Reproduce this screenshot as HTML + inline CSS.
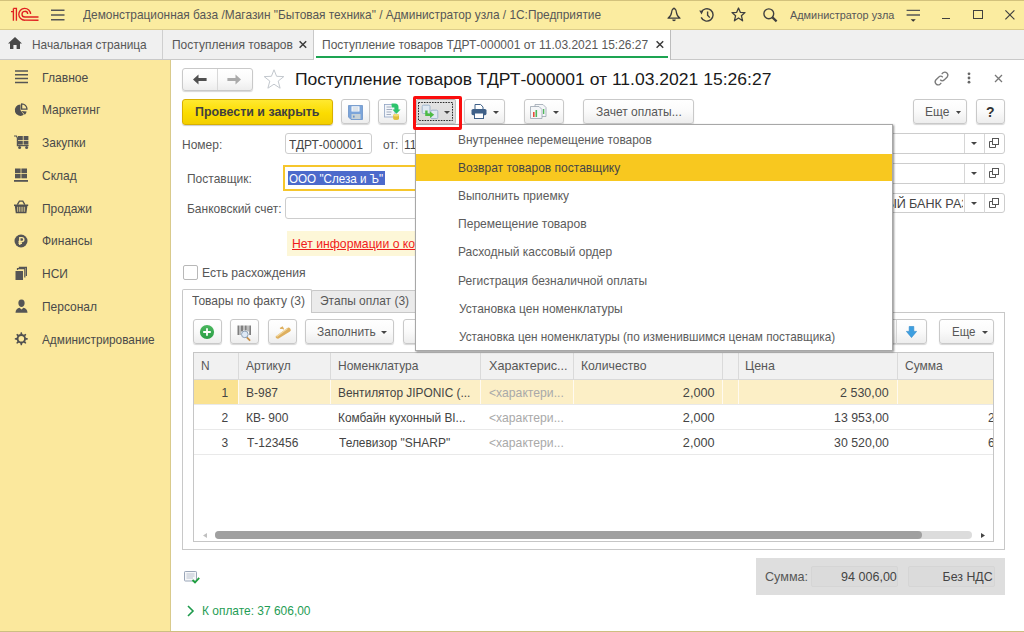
<!DOCTYPE html>
<html><head><meta charset="utf-8">
<style>
*{box-sizing:border-box;margin:0;padding:0}
html,body{width:1024px;height:632px;overflow:hidden;background:#fff;font-family:"Liberation Sans",sans-serif;color:#575757;font-size:13px}
.a{position:absolute;white-space:pre;line-height:1}
.b{position:absolute}
svg{position:absolute;overflow:visible}
.btn{position:absolute;height:25px;border:1px solid #c9c9c9;border-radius:3px;background:linear-gradient(#ffffff 0%,#fafafa 50%,#ededed 100%);box-shadow:0 1px 1px rgba(0,0,0,.16)}
.fld{position:absolute;height:21px;border:1px solid #cdcdcd;border-radius:3px;background:#fff}
</style></head><body>
<div class="b" style="left:0;top:0;width:1024px;height:30px;background:#fbeca0;border-top:1px solid #d3c27c;border-bottom:1px solid #ddcd8a"></div>
<div class="b" style="left:0;top:30px;width:1024px;height:30px;background:#f0f0f0;border-bottom:1px solid #c9c9c9"></div>
<div class="b" style="left:0;top:60px;width:171px;height:572px;background:#fbe89d;border-right:1px solid #d9ca8c"></div>
<div class="b" style="left:0;top:631px;width:1024px;height:1px;background:#cdbf80"></div>
<svg style="left:0;top:0" width="45" height="28" viewBox="0 0 45 28"><g fill="none" stroke="#e02020" stroke-width="1.35">
<path d="M11 11.6 H13.4 M13.4 8.4 V20.8 M13.4 8.4 H16.4 V20.8"/>
<path d="M30.6 14.1 A5.9 5.9 0 1 0 24.8 20.2 H38.5"/>
<path d="M27.7 14.1 A2.85 2.85 0 1 0 24.85 17 H38.5"/></g></svg>
<svg style="left:51px;top:9px" width="14" height="12" viewBox="0 0 14 12"><g stroke="#555" stroke-width="1.5"><path d="M0 1.2H13.5M0 6H13.5M0 10.8H13.5"/></g></svg>
<div class="a" style="top:8px;font-size:13px;left:83.00px;transform-origin:0 0;transform:scaleX(0.9136);">Демонстрационная база /Магазин "Бытовая техника" / Администратор узла / 1С:Предприятие</div>
<svg style="left:667px;top:7px" width="14" height="15" viewBox="0 0 14 15"><path d="M7 1.6 C5.4 1.6 4.9 2.8 4.6 5.4 C4.3 8.4 3.4 9.6 1 11.2 H13 C10.6 9.6 9.7 8.4 9.4 5.4 C9.1 2.8 8.6 1.6 7 1.6Z" fill="none" stroke="#3c3c3c" stroke-width="1.25" stroke-linejoin="round"/><circle cx="7" cy="1.3" r="0.9" fill="#3c3c3c"/><path d="M5.2 12.6 H8.8 A1.8 1.7 0 0 1 5.2 12.6Z" fill="#3c3c3c"/></svg>
<svg style="left:699px;top:8px" width="16" height="14" viewBox="0 0 16 14"><g fill="none" stroke="#404040" stroke-width="1.4"><path d="M2.3 4.2 A6.2 6.2 0 1 1 2.2 9.4"/><path d="M8.6 3.6 V7.2 L10.8 9.6"/></g><path d="M0.2 2.6 L4.2 2.8 L2.6 6.4Z" fill="#404040"/></svg>
<svg style="left:731px;top:7px" width="15" height="15" viewBox="0 0 15 15"><path d="M7.5 1 L9.3 5.3 L14 5.6 L10.4 8.7 L11.6 13.8 L7.5 11 L3.4 13.8 L4.6 8.7 L1 5.6 L5.7 5.3Z" fill="none" stroke="#404040" stroke-width="1.3" stroke-linejoin="round"/></svg>
<svg style="left:763px;top:8px" width="15" height="14" viewBox="0 0 15 14"><g fill="none" stroke="#404040"><circle cx="5.8" cy="5.8" r="4.9" stroke-width="1.4"/><path d="M9.4 9.4 L13.6 13.4" stroke-width="2.2"/></g></svg>
<div class="a" style="top:10px;font-size:11px;left:790.00px;transform-origin:0 0;transform:scaleX(0.9905);">Администратор узла</div>
<svg style="left:906px;top:9px" width="15" height="13" viewBox="0 0 15 13"><g stroke="#555" stroke-width="1.3"><path d="M0.6 1.3H14M0.6 6H14"/></g><path d="M4.6 10.2 H9.8 L7.2 12.8Z" fill="#333"/></svg>
<div class="b" style="left:942px;top:18px;width:8px;height:1.3px;background:#404040"></div>
<div class="b" style="left:973px;top:10px;width:9.5px;height:9px;border:1.3px solid #404040"></div>
<svg style="left:1005px;top:10px" width="10" height="10" viewBox="0 0 10 10"><path d="M0.4 0.4 L9.4 9.4 M9.4 0.4 L0.4 9.4" stroke="#404040" stroke-width="1.2"/></svg>
<svg style="left:8px;top:37px" width="14" height="12" viewBox="0 0 14 12"><path d="M7 0 L14 6.4 H12 V12 H8.6 V8 H5.4 V12 H2 V6.4 H0 Z" fill="#484848"/></svg>
<div class="a" style="top:38px;font-size:13px;left:32.09px;transform-origin:0 0;transform:scaleX(0.9120);">Начальная страница</div>
<div class="b" style="left:162px;top:30px;width:1px;height:29px;background:#cfcfcf"></div>
<div class="a" style="top:38px;font-size:13px;left:171.58px;transform-origin:0 0;transform:scaleX(0.9225);">Поступления товаров</div>
<svg style="left:299px;top:41px" width="8" height="7" viewBox="0 0 8 7"><path d="M0.6 0.3 L7.2 6.7 M7.2 0.3 L0.6 6.7" stroke="#3c3c3c" stroke-width="1.5"/></svg>
<div class="b" style="left:313px;top:30px;width:358px;height:30px;background:#fff;border-left:1px solid #c9c9c9;border-right:1px solid #bdbdbd"></div>
<div class="b" style="left:316px;top:56px;width:352px;height:2px;background:#1da452"></div>
<div class="a" style="top:38px;font-size:13px;left:322.08px;transform-origin:0 0;transform:scaleX(0.9233);">Поступление товаров ТДРТ-000001 от 11.03.2021 15:26:27</div>
<svg style="left:656px;top:41px" width="8" height="7" viewBox="0 0 8 7"><path d="M0.6 0.3 L7.2 6.7 M7.2 0.3 L0.6 6.7" stroke="#3c3c3c" stroke-width="1.5"/></svg>
<div class="a" style="top:71px;font-size:13px;color:#4a4a4a;left:41.57px;transform-origin:0 0;transform:scaleX(0.9333);">Главное</div>
<div class="a" style="top:103px;font-size:13px;color:#4a4a4a;left:41.58px;transform-origin:0 0;transform:scaleX(0.9220);">Маркетинг</div>
<div class="a" style="top:136px;font-size:13px;color:#4a4a4a;left:41.58px;transform-origin:0 0;transform:scaleX(0.9220);">Закупки</div>
<div class="a" style="top:169px;font-size:13px;color:#4a4a4a;left:41.58px;transform-origin:0 0;transform:scaleX(0.9220);">Склад</div>
<div class="a" style="top:202px;font-size:13px;color:#4a4a4a;left:41.58px;transform-origin:0 0;transform:scaleX(0.9220);">Продажи</div>
<div class="a" style="top:234px;font-size:13px;color:#4a4a4a;left:41.58px;transform-origin:0 0;transform:scaleX(0.9220);">Финансы</div>
<div class="a" style="top:267px;font-size:13px;color:#4a4a4a;left:41.58px;transform-origin:0 0;transform:scaleX(0.9220);">НСИ</div>
<div class="a" style="top:300px;font-size:13px;color:#4a4a4a;left:41.58px;transform-origin:0 0;transform:scaleX(0.9220);">Персонал</div>
<div class="a" style="top:333px;font-size:13px;color:#4a4a4a;left:41.80px;transform-origin:0 0;transform:scaleX(0.9081);">Администрирование</div>
<svg style="left:14px;top:70px" width="14" height="14" viewBox="0 0 14 14"><g stroke="#555" stroke-width="1.5"><path d="M1 1H14M1 4.8H14M1 8.6H14M1 12.4H14"/></g></svg>
<svg style="left:14px;top:102px" width="15" height="15" viewBox="0 0 15 15"><g fill="#505050"><path d="M6.5 8.2 L9.77 12.87 A5.7 5.7 0 1 1 6.5 2.5 Z"/><path d="M7.4 9 L12.6 9.6 A5.2 5.2 0 0 1 10.9 12.8 Z"/></g><path d="M7.6 7.2 V1.8 A5.4 5.4 0 0 1 13 7.2 Z" fill="none" stroke="#505050" stroke-width="1.3" stroke-linejoin="round"/></svg>
<svg style="left:14px;top:135px" width="15" height="14" viewBox="0 0 15 14"><path d="M0 1 H2.4 L3.4 3 V10.6 H14.6" fill="none" stroke="#555" stroke-width="1.2"/><g fill="#555"><rect x="4" y="1" width="4.8" height="4"/><rect x="9.6" y="1" width="4.8" height="4"/><rect x="4" y="5.8" width="4.8" height="3.8"/><rect x="9.6" y="5.8" width="4.8" height="3.8"/><circle cx="5.6" cy="12.4" r="1.5"/><circle cx="12.6" cy="12.4" r="1.5"/></g></svg>
<svg style="left:14px;top:168px" width="14" height="14" viewBox="0 0 14 14"><g fill="#555"><rect x="1" y="0.5" width="5.6" height="4.6"/><rect x="7.4" y="0.5" width="5.6" height="4.6"/><rect x="1" y="5.9" width="5.6" height="4.4"/><rect x="7.4" y="5.9" width="5.6" height="4.4"/><rect x="0" y="12" width="14" height="1.8"/></g></svg>
<svg style="left:14px;top:200px" width="15" height="14" viewBox="0 0 15 14"><path d="M0 4.6 H14.2 V6 H13.4 L12.4 13.2 H1.8 L0.8 6 H0Z" fill="#505050"/><path d="M3.4 4.6 L5.4 1.2 H8.8 L10.8 4.6" fill="none" stroke="#505050" stroke-width="1.3"/><g stroke="#fbe89d" stroke-width="0.7"><path d="M3.6 6.8 V11.8M5.4 6.8V11.8M7.1 6.8V11.8M8.8 6.8V11.8M10.6 6.8V11.8"/></g></svg>
<svg style="left:14px;top:234px" width="14" height="14" viewBox="0 0 14 14"><circle cx="7" cy="7" r="6.5" fill="#555"/><path d="M5.8 11 V3.6 H7.9 A1.95 1.95 0 0 1 7.9 7.5 H4.5 M4.5 9.2 H8" fill="none" stroke="#fbe89d" stroke-width="1.4"/></svg>
<svg style="left:15px;top:267px" width="12" height="13" viewBox="0 0 12 13"><rect x="0.5" y="4" width="7.5" height="9" fill="#555"/><path d="M2.5 3 V1.6 H9.8 V10.6 M4.4 1 V0.4 H11.4 V9" fill="none" stroke="#555" stroke-width="1.2"/></svg>
<svg style="left:15px;top:299px" width="13" height="14" viewBox="0 0 13 14"><g fill="#555"><path d="M6.5 0.5 C9 0.5 9.8 2.5 9.6 4.5 C9.4 6.6 8.2 8 6.5 8 C4.8 8 3.6 6.6 3.4 4.5 C3.2 2.5 4 0.5 6.5 0.5Z"/><path d="M0.5 13.8 C0.5 10.5 2.5 9.2 4.5 8.8 L6.5 10.5 L8.5 8.8 C10.5 9.2 12.5 10.5 12.5 13.8Z"/></g></svg>
<svg style="left:14px;top:332px" width="15" height="14" viewBox="0 0 15 14"><g transform="translate(7.3 6.8)"><circle r="3.75" fill="none" stroke="#505050" stroke-width="1.9"/><g fill="#505050"><path d="M-1.1 -4.2 L-0.6 -6.5 H0.6 L1.1 -4.2Z" transform="rotate(0)"/><path d="M-1.1 -4.2 L-0.6 -6.5 H0.6 L1.1 -4.2Z" transform="rotate(45)"/><path d="M-1.1 -4.2 L-0.6 -6.5 H0.6 L1.1 -4.2Z" transform="rotate(90)"/><path d="M-1.1 -4.2 L-0.6 -6.5 H0.6 L1.1 -4.2Z" transform="rotate(135)"/><path d="M-1.1 -4.2 L-0.6 -6.5 H0.6 L1.1 -4.2Z" transform="rotate(180)"/><path d="M-1.1 -4.2 L-0.6 -6.5 H0.6 L1.1 -4.2Z" transform="rotate(225)"/><path d="M-1.1 -4.2 L-0.6 -6.5 H0.6 L1.1 -4.2Z" transform="rotate(270)"/><path d="M-1.1 -4.2 L-0.6 -6.5 H0.6 L1.1 -4.2Z" transform="rotate(315)"/></g></g></svg>
<div class="btn" style="left:182px;top:68px;width:71px;height:23px"></div>
<div class="b" style="left:217px;top:69px;width:1px;height:21px;background:#d8d8d8"></div>
<svg style="left:193px;top:74px" width="14" height="11" viewBox="0 0 14 11"><path d="M0 5.5 L5.5 0.5 V4 H13.6 V7 H5.5 V10.5Z" fill="#505050"/></svg>
<svg style="left:227px;top:74px" width="14" height="11" viewBox="0 0 14 11"><path d="M14 5.5 L8.5 0.5 V4 H0.4 V7 H8.5 V10.5Z" fill="#aaaaaa"/></svg>
<svg style="left:263px;top:69px" width="22" height="20" viewBox="0 0 22 20"><path d="M11 0.8 L13.6 7.3 L20.8 7.6 L15.2 12.1 L17.1 19.2 L11 15.2 L4.9 19.2 L6.8 12.1 L1.2 7.6 L8.4 7.3Z" fill="none" stroke="#c3c8ce" stroke-width="1"/></svg>
<div class="a" style="top:71px;font-size:17px;color:#1a1a1a;left:294.97px;transform-origin:0 0;transform:scaleX(1.0313);">Поступление товаров ТДРТ-000001 от 11.03.2021 15:26:27</div>
<svg style="left:933px;top:70px" width="17" height="17" viewBox="0 0 17 17"><g fill="none" stroke="#7a7a7a" stroke-width="1.3"><path d="M7.2 9.8 A3 3 0 0 0 11.4 9.8 L14.2 7 A3 3 0 0 0 10 2.8 L8.7 4.1"/><path d="M9.8 7.2 A3 3 0 0 0 5.6 7.2 L2.8 10 A3 3 0 0 0 7 14.2 L8.3 12.9"/></g></svg>
<svg style="left:967px;top:72px" width="4" height="12" viewBox="0 0 4 12"><g fill="#666"><circle cx="2" cy="1.8" r="1.4"/><circle cx="2" cy="6" r="1.4"/><circle cx="2" cy="10.2" r="1.4"/></g></svg>
<svg style="left:994px;top:74px" width="9" height="9" viewBox="0 0 9 9"><path d="M1 1 L8 8 M8 1 L1 8" stroke="#777" stroke-width="1.3"/></svg>
<div class="b" style="left:182px;top:99px;width:151px;height:26px;border:1px solid #d8b000;border-radius:3px;background:linear-gradient(#ffe930,#fbdc00 55%,#f3cf00);box-shadow:0 1px 1px rgba(0,0,0,.2)"></div>
<div class="a" style="top:105px;font-size:13px;font-weight:bold;color:#3f3f3f;left:194.84px;transform-origin:0 0;transform:scaleX(0.9550);">Провести и закрыть</div>
<div class="btn" style="left:341px;top:99px;width:29px"></div>
<svg style="left:348px;top:105px" width="15" height="15" viewBox="0 0 15 15"><path d="M0.5 0.5 H14.5 V14.5 H3 L0.5 12Z" fill="#7ca5da" stroke="#6a92c8" stroke-width="0.8"/><rect x="3.5" y="1.3" width="8" height="5.2" fill="#fff"/><path d="M4.5 3 H10.5 M4.5 5 H10.5" stroke="#9fb2c6" stroke-width="0.7"/><rect x="3.5" y="9" width="9" height="5" fill="#c7d1d6"/><rect x="5" y="10.6" width="1.6" height="2" fill="#6a92c8"/></svg>
<div class="btn" style="left:378px;top:99px;width:29px"></div>
<svg style="left:384px;top:103px" width="17" height="18" viewBox="0 0 17 18"><rect x="0.5" y="1.5" width="10.5" height="12.5" fill="#f2f5fa" stroke="#90a4c2" stroke-width="0.8"/><path d="M2.5 4 H7 M2.5 6.5 H8 M2.5 9 H7.5 M2.5 11.5 H7" stroke="#8e9bb0" stroke-width="0.8"/><path d="M9.2 12.2 A2.9 1.2 0 0 1 15 12.2 V15.8 A2.9 1.2 0 0 1 9.2 15.8Z" fill="#e0bf3c"/><ellipse cx="12.1" cy="12.2" rx="2.9" ry="1.2" fill="#f3dc7a"/><path d="M7.6 0.6 H11 A3.5 3.5 0 0 1 14.5 4.1 V6.4 H16.6 L12.5 10.8 L8.4 6.4 H10.5 V4.6 H7.6Z" fill="#2cc46c"/></svg>
<div class="btn" style="left:464px;top:99px;width:41px"></div>
<svg style="left:471px;top:104px" width="16" height="15" viewBox="0 0 16 15"><path d="M4 5 V0.5 H9.6 L12 2.9 V5" fill="#fff" stroke="#3f6088" stroke-width="1"/><rect x="0.5" y="5" width="15" height="6.2" rx="1.6" fill="#3f6088"/><rect x="3.5" y="9" width="9" height="5.5" fill="#fff" stroke="#3f6088" stroke-width="1"/></svg>
<svg style="left:493px;top:111px" width="6" height="3" viewBox="0 0 6 3"><path d="M0 0H6L3 3Z" fill="#444"/></svg>
<div class="btn" style="left:524px;top:99px;width:40px"></div>
<svg style="left:530px;top:104px" width="17" height="15" viewBox="0 0 17 15"><path d="M5 0.5 H13 L16 3.5 V12.5 H5Z" fill="#f4f6f8" stroke="#9aa5b0" stroke-width="0.8"/><path d="M0.5 2.5 H9 L12 5.5 V14.5 H0.5Z" fill="#f4f6f8" stroke="#9aa5b0" stroke-width="0.8"/><rect x="3" y="8" width="1.6" height="5" fill="#e64b3c"/><rect x="5.5" y="6" width="1.6" height="7" fill="#4fb85a"/><rect x="13" y="5" width="1.3" height="5" fill="#4fb85a"/></svg>
<svg style="left:553px;top:111px" width="6" height="3" viewBox="0 0 6 3"><path d="M0 0H6L3 3Z" fill="#444"/></svg>
<div class="btn" style="left:583px;top:99px;width:111px"></div>
<div class="a" style="top:105px;font-size:13px;left:595.88px;transform-origin:0 0;transform:scaleX(0.9231);">Зачет оплаты...</div>
<div class="btn" style="left:913px;top:99px;width:54px"></div>
<div class="a" style="top:105px;font-size:13px;left:925.08px;transform-origin:0 0;transform:scaleX(0.9220);">Еще</div>
<svg style="left:956px;top:111px" width="5" height="3" viewBox="0 0 5 3"><path d="M0 0H5L2.5 3Z" fill="#444"/></svg>
<div class="btn" style="left:976px;top:99px;width:29px"></div>
<div class="a" style="top:105px;font-size:14px;font-weight:bold;color:#333;left:986.00px;transform-origin:0 0;transform:scaleX(1.0000);">?</div>
<div class="a" style="top:138px;font-size:13px;left:181.58px;transform-origin:0 0;transform:scaleX(0.9220);">Номер:</div>
<div class="fld" style="left:285px;top:133px;width:87px"></div>
<div class="a" style="top:138px;font-size:13px;color:#444;left:288.50px;transform-origin:0 0;transform:scaleX(0.9220);">ТДРТ-000001</div>
<div class="a" style="top:138px;font-size:13px;left:382.50px;transform-origin:0 0;transform:scaleX(0.9220);">от:</div>
<div class="fld" style="left:402px;top:133px;width:60px"></div>
<div class="a" style="top:138px;font-size:13px;color:#444;left:404.08px;transform-origin:0 0;transform:scaleX(0.9220);">11.03.2021 15:26:27</div>
<div class="fld" style="left:860px;top:133px;width:145px;height:21px"></div>
<div class="b" style="left:964px;top:134px;width:1px;height:19px;background:#d6d6d6"></div>
<div class="b" style="left:984px;top:134px;width:1px;height:19px;background:#d6d6d6"></div>
<svg style="left:971px;top:142px" width="6" height="3" viewBox="0 0 6 3"><path d="M0 0H6L3 3Z" fill="#444"/></svg>
<svg style="left:989px;top:138px" width="10" height="10" viewBox="0 0 10 10"><g fill="none" stroke="#555" stroke-width="1"><rect x="3.5" y="0.5" width="6" height="6"/><path d="M3.5 3.5 H0.5 V9.5 H6.5 V6.5"/></g></svg>
<div class="fld" style="left:860px;top:163px;width:145px;height:21px"></div>
<div class="b" style="left:964px;top:164px;width:1px;height:19px;background:#d6d6d6"></div>
<div class="b" style="left:984px;top:164px;width:1px;height:19px;background:#d6d6d6"></div>
<svg style="left:971px;top:172px" width="6" height="3" viewBox="0 0 6 3"><path d="M0 0H6L3 3Z" fill="#444"/></svg>
<svg style="left:989px;top:168px" width="10" height="10" viewBox="0 0 10 10"><g fill="none" stroke="#555" stroke-width="1"><rect x="3.5" y="0.5" width="6" height="6"/><path d="M3.5 3.5 H0.5 V9.5 H6.5 V6.5"/></g></svg>
<div class="fld" style="left:860px;top:193px;width:145px;height:20px"></div>
<div class="b" style="left:964px;top:194px;width:1px;height:19px;background:#d6d6d6"></div>
<div class="b" style="left:984px;top:194px;width:1px;height:19px;background:#d6d6d6"></div>
<svg style="left:971px;top:202px" width="6" height="3" viewBox="0 0 6 3"><path d="M0 0H6L3 3Z" fill="#444"/></svg>
<svg style="left:989px;top:198px" width="10" height="10" viewBox="0 0 10 10"><g fill="none" stroke="#555" stroke-width="1"><rect x="3.5" y="0.5" width="6" height="6"/><path d="M3.5 3.5 H0.5 V9.5 H6.5 V6.5"/></g></svg>
<div class="b" style="left:0;top:0;width:963px;height:632px;overflow:hidden">
<div class="a" style="top:197px;font-size:13px;color:#444;left:884.87px;width:20.86px;transform-origin:100% 0;transform:scaleX(0.9700);">ЫЙ</div>
<div class="a" style="top:197px;font-size:13px;color:#444;left:908.53px;transform-origin:0 0;transform:scaleX(0.9700);">БАНК РАЗВИТИЯ</div>
</div>
<div class="a" style="top:172px;font-size:13px;left:186.58px;transform-origin:0 0;transform:scaleX(0.9220);">Поставщик:</div>
<div class="b" style="left:283px;top:165px;width:170px;height:26px;border:2px solid #f6c62c;background:#fff"></div>
<div class="b" style="left:288px;top:171px;width:97px;height:14px;background:#4c6acb"></div>
<div class="a" style="top:172px;font-size:13px;color:#fff;left:289.00px;transform-origin:0 0;transform:scaleX(0.8952);">ООО "Слеза и Ъ"</div>
<div class="a" style="top:202px;font-size:13px;left:186.58px;transform-origin:0 0;transform:scaleX(0.9220);">Банковский счет:</div>
<div class="fld" style="left:285px;top:197px;width:170px;height:22px"></div>
<div class="b" style="left:287px;top:231px;width:140px;height:25px;background:#fdf7d8"></div>
<div class="a" style="top:237px;font-size:13px;color:#f01c1c;left:292.06px;transform-origin:0 0;transform:scaleX(0.9400);text-decoration:underline;">Нет информации о контрагенте</div>
<div class="b" style="left:183px;top:265px;width:15px;height:15px;border:1px solid #b8b8b8;border-radius:2px;background:#fff"></div>
<div class="a" style="top:266px;font-size:13px;left:202.06px;transform-origin:0 0;transform:scaleX(0.9358);">Есть расхождения</div>
<div class="b" style="left:182px;top:312px;width:823px;height:238px;border:1px solid #c8c8c8"></div>
<div class="b" style="left:182px;top:289px;width:130px;height:24px;background:#fff;border:1px solid #c8c8c8;border-bottom:none;border-radius:2px 2px 0 0"></div>
<div class="b" style="left:311px;top:290px;width:110px;height:23px;background:#ebebeb;border:1px solid #c8c8c8;border-radius:2px 2px 0 0"></div>
<div class="a" style="top:294px;font-size:13px;left:191.50px;transform-origin:0 0;transform:scaleX(0.9256);">Товары по факту (3)</div>
<div class="a" style="top:294px;font-size:13px;left:320.08px;transform-origin:0 0;transform:scaleX(0.9220);">Этапы оплат (3)</div>
<div class="btn" style="left:193px;top:319px;width:29px"></div>
<svg style="left:199px;top:324px" width="16" height="16" viewBox="0 0 16 16"><defs><linearGradient id="gg" x1="0" y1="0" x2="0" y2="1"><stop offset="0" stop-color="#4cb860"/><stop offset="1" stop-color="#2a9e45"/></linearGradient></defs><circle cx="8" cy="8" r="7.1" fill="url(#gg)"/><path d="M8 4.2 V11.8 M4.2 8 H11.8" stroke="#fff" stroke-width="1.8"/></svg>
<div class="btn" style="left:230px;top:319px;width:29px"></div>
<svg style="left:237px;top:325px" width="16" height="16" viewBox="0 0 16 16"><g fill="#606060"><rect x="0.6" y="0.5" width="1.2" height="9.5"/><rect x="2.6" y="0.5" width="0.8" height="9.5"/><rect x="4.2" y="0.5" width="1.6" height="6"/><rect x="6.6" y="0.5" width="0.8" height="5"/><rect x="8.2" y="0.5" width="1.4" height="5"/><rect x="10.6" y="0.5" width="0.8" height="6"/><rect x="12.4" y="0.5" width="1.4" height="9.5"/></g><path d="M9.6 12.2 L12.6 15.2" stroke="#c8904a" stroke-width="1.8" stroke-linecap="round"/><circle cx="7.8" cy="9.4" r="3.3" fill="#dfe9f5" stroke="#8ea2b8" stroke-width="1"/></svg>
<div class="btn" style="left:268px;top:319px;width:29px"></div>
<svg style="left:274px;top:325px" width="17" height="14" viewBox="0 0 17 14"><path d="M1.6 11.4 L13 3.2 A2.2 2.2 0 0 1 16 6.6 L4.6 13.6 A2.2 2.2 0 0 1 1.6 11.4Z" fill="#deb060"/><path d="M2.6 11.6 L13.4 3.6" stroke="#f3d9a2" stroke-width="1.2"/><path d="M6 3.6 L8.4 2.2 L9.6 4.4" fill="none" stroke="#deb060" stroke-width="1.2"/></svg>
<div class="btn" style="left:305px;top:319px;width:89px"></div>
<div class="a" style="top:325px;font-size:13px;left:317.08px;transform-origin:0 0;transform:scaleX(0.9220);">Заполнить</div>
<svg style="left:381px;top:331px" width="6" height="3" viewBox="0 0 6 3"><path d="M0 0H6L3 3Z" fill="#444"/></svg>
<div class="btn" style="left:403px;top:319px;width:30px"></div>
<div class="btn" style="left:866px;top:319px;width:61px"></div>
<div class="b" style="left:896px;top:320px;width:1px;height:24px;background:#d4d4d4"></div>
<svg style="left:906px;top:326px" width="11" height="12" viewBox="0 0 11 12"><path d="M3.2 0.5 H7.8 V5.4 H10.6 L5.5 11.6 L0.4 5.4 H3.2Z" fill="#3d9fe0" stroke="#2d86c8" stroke-width="0.6"/></svg>
<div class="btn" style="left:939px;top:319px;width:55px"></div>
<div class="a" style="top:325px;font-size:13px;left:952.11px;transform-origin:0 0;transform:scaleX(0.8880);">Еще</div>
<svg style="left:982px;top:331px" width="6" height="3" viewBox="0 0 6 3"><path d="M0 0H6L3 3Z" fill="#444"/></svg>
<div class="b" style="left:193px;top:352px;width:801px;height:190px;border:1px solid #c6c6c6;background:#fff;overflow:hidden"><div class="b" style="left:0;top:0;width:800px;height:27px;background:#f1f1f1;border-bottom:1px solid #d9d9d9"></div><div class="b" style="left:44px;top:0;width:1px;height:26px;background:#dadada"></div><div class="b" style="left:136px;top:0;width:1px;height:26px;background:#dadada"></div><div class="b" style="left:286px;top:0;width:1px;height:26px;background:#dadada"></div><div class="b" style="left:379px;top:0;width:1px;height:26px;background:#dadada"></div><div class="b" style="left:528px;top:0;width:1px;height:26px;background:#dadada"></div><div class="b" style="left:544px;top:0;width:1px;height:26px;background:#dadada"></div><div class="b" style="left:703px;top:0;width:1px;height:26px;background:#dadada"></div><div class="b" style="left:0;top:27px;width:800px;height:24px;background:#fcefc6"></div><div class="b" style="left:0;top:27px;width:44px;height:24px;background:#fae291"></div><div class="b" style="left:44px;top:27px;width:1px;height:24px;background:#fffaf0"></div><div class="b" style="left:136px;top:27px;width:1px;height:24px;background:#fffaf0"></div><div class="b" style="left:286px;top:27px;width:1px;height:24px;background:#fffaf0"></div><div class="b" style="left:379px;top:27px;width:1px;height:24px;background:#fffaf0"></div><div class="b" style="left:528px;top:27px;width:1px;height:24px;background:#fffaf0"></div><div class="b" style="left:544px;top:27px;width:1px;height:24px;background:#fffaf0"></div><div class="b" style="left:703px;top:27px;width:1px;height:24px;background:#fffaf0"></div><div class="b" style="left:0;top:51px;width:800px;height:1px;background:#e9e9e9"></div><div class="b" style="left:0;top:76px;width:800px;height:1px;background:#e9e9e9"></div><div class="b" style="left:0;top:101px;width:800px;height:1px;background:#e9e9e9"></div><div class="b" style="left:21px;top:178px;width:757px;height:8px;border-radius:4px;background:#dcdcdc"></div><div class="b" style="left:21px;top:178px;width:707px;height:8px;border-radius:4px;background:#a0a0a0"></div><svg style="left:9px;top:180px" width="4" height="5" viewBox="0 0 4 5"><path d="M4 0V5L0 2.5Z" fill="#c0c0c0"/></svg><svg style="left:787px;top:180px" width="4" height="5" viewBox="0 0 4 5"><path d="M0 0V5L4 2.5Z" fill="#444"/></svg></div>
<div class="a" style="top:359px;font-size:13px;left:201.08px;transform-origin:0 0;transform:scaleX(0.9220);">N</div>
<div class="a" style="top:359px;font-size:13px;left:246.00px;transform-origin:0 0;transform:scaleX(0.9220);">Артикул</div>
<div class="a" style="top:359px;font-size:13px;left:337.78px;transform-origin:0 0;transform:scaleX(0.9220);">Номенклатура</div>
<div class="a" style="top:359px;font-size:13px;left:488.70px;transform-origin:0 0;transform:scaleX(0.9700);">Характерис...</div>
<div class="a" style="top:359px;font-size:13px;left:580.76px;transform-origin:0 0;transform:scaleX(0.9382);">Количество</div>
<div class="a" style="top:359px;font-size:13px;left:745.24px;transform-origin:0 0;transform:scaleX(0.9567);">Цена</div>
<div class="a" style="top:359px;font-size:13px;left:904.78px;transform-origin:0 0;transform:scaleX(0.9250);">Сумма</div>
<div class="a" style="top:386px;font-size:13px;color:#444;left:221.48px;width:7.23px;transform-origin:100% 0;transform:scaleX(0.9220);">1</div>
<div class="a" style="top:386px;font-size:13px;color:#444;left:245.58px;transform-origin:0 0;transform:scaleX(0.9220);">B-987</div>
<div class="a" style="top:386px;font-size:13px;color:#444;left:337.69px;transform-origin:0 0;transform:scaleX(0.9140);">Вентилятор JIPONIC (...</div>
<div class="a" style="top:386px;font-size:13px;color:#a9a9a9;left:488.70px;transform-origin:0 0;transform:scaleX(0.9367);">&lt;характери...</div>
<div class="a" style="top:386px;font-size:13px;color:#444;left:681.99px;width:32.55px;transform-origin:100% 0;transform:scaleX(0.9742);">2,000</div>
<div class="a" style="top:386px;font-size:13px;color:#444;left:838.28px;width:50.61px;transform-origin:100% 0;transform:scaleX(0.9592);">2 530,00</div>
<div class="a" style="top:411px;font-size:13px;color:#444;left:221.48px;width:7.23px;transform-origin:100% 0;transform:scaleX(0.9220);">2</div>
<div class="a" style="top:411px;font-size:13px;color:#444;left:245.58px;transform-origin:0 0;transform:scaleX(0.9220);">КВ- 900</div>
<div class="a" style="top:411px;font-size:13px;color:#444;left:337.69px;transform-origin:0 0;transform:scaleX(0.9130);">Комбайн кухонный BI...</div>
<div class="a" style="top:411px;font-size:13px;color:#a9a9a9;left:488.70px;transform-origin:0 0;transform:scaleX(0.9367);">&lt;характери...</div>
<div class="a" style="top:411px;font-size:13px;color:#444;left:681.99px;width:32.55px;transform-origin:100% 0;transform:scaleX(0.9742);">2,000</div>
<div class="a" style="top:411px;font-size:13px;color:#444;left:831.25px;width:57.84px;transform-origin:100% 0;transform:scaleX(0.9464);">13 953,00</div>
<div class="a" style="top:436px;font-size:13px;color:#444;left:221.48px;width:7.23px;transform-origin:100% 0;transform:scaleX(0.9220);">3</div>
<div class="a" style="top:436px;font-size:13px;color:#444;left:246.50px;transform-origin:0 0;transform:scaleX(0.9220);">Т-123456</div>
<div class="a" style="top:436px;font-size:13px;color:#444;left:338.60px;transform-origin:0 0;transform:scaleX(0.9198);">Телевизор "SHARP"</div>
<div class="a" style="top:436px;font-size:13px;color:#a9a9a9;left:488.70px;transform-origin:0 0;transform:scaleX(0.9367);">&lt;характери...</div>
<div class="a" style="top:436px;font-size:13px;color:#444;left:681.99px;width:32.55px;transform-origin:100% 0;transform:scaleX(0.9742);">2,000</div>
<div class="a" style="top:436px;font-size:13px;color:#444;left:831.25px;width:57.84px;transform-origin:100% 0;transform:scaleX(0.9464);">30 520,00</div>
<div class="b" style="left:0;top:0;width:993px;height:632px;overflow:hidden">
<div class="a" style="top:411px;font-size:13px;color:#444;left:987.68px;transform-origin:0 0;transform:scaleX(0.9220);">2</div>
<div class="a" style="top:436px;font-size:13px;color:#444;left:987.68px;transform-origin:0 0;transform:scaleX(0.9220);">6</div>
</div>
<svg style="left:184px;top:571px" width="16" height="13" viewBox="0 0 16 13"><rect x="0.5" y="0.5" width="12" height="9.5" rx="0.8" fill="#f6f7f9" stroke="#8e9cb0" stroke-width="0.9"/><path d="M2.5 3 H10.5 M2.5 5 H10.5 M2.5 7 H9" stroke="#b4bccb" stroke-width="0.9"/><path d="M8.5 9 L11 11.5 L15.2 6.8" fill="none" stroke="#20a040" stroke-width="1.8"/></svg>
<svg style="left:187px;top:605px" width="7" height="12" viewBox="0 0 7 12"><path d="M1 1 L6 6 L1 11" fill="none" stroke="#1e9a4c" stroke-width="1.6"/></svg>
<div class="a" style="top:604px;font-size:13px;color:#1f9d55;left:202.08px;transform-origin:0 0;transform:scaleX(0.9188);">К оплате: 37 606,00</div>
<div class="b" style="left:756px;top:558px;width:249px;height:37px;background:#dedede"></div>
<div class="b" style="left:811px;top:566px;width:87px;height:21px;background:#dbdbdb;border:1px solid #d5d5d5;border-radius:2px"></div>
<div class="b" style="left:908px;top:566px;width:87px;height:21px;background:#dbdbdb;border:1px solid #d5d5d5;border-radius:2px"></div>
<div class="a" style="top:570px;font-size:13px;left:764.63px;transform-origin:0 0;transform:scaleX(0.9690);">Сумма:</div>
<div class="a" style="top:570px;font-size:13px;color:#444;left:838.97px;width:57.84px;transform-origin:100% 0;transform:scaleX(0.9643);">94 006,00</div>
<div class="a" style="top:570px;font-size:13px;color:#444;left:939.97px;width:52.64px;transform-origin:100% 0;transform:scaleX(0.9510);">Без НДС</div>
<div class="b" style="left:415px;top:124px;width:478px;height:227px;background:#fff;border:1px solid #a8a8a8;box-shadow:1px 1px 2px rgba(0,0,0,.45)"></div>
<div class="b" style="left:416px;top:154px;width:476px;height:27px;background:#f8c81f"></div>
<div class="a" style="top:133px;font-size:13px;color:#5c5c5c;left:458.08px;transform-origin:0 0;transform:scaleX(0.9162);">Внутреннее перемещение товаров</div>
<div class="a" style="top:161px;font-size:13px;color:#464646;left:458.07px;transform-origin:0 0;transform:scaleX(0.9253);">Возврат товаров поставщику</div>
<div class="a" style="top:189px;font-size:13px;color:#5c5c5c;left:458.08px;transform-origin:0 0;transform:scaleX(0.9220);">Выполнить приемку</div>
<div class="a" style="top:217px;font-size:13px;color:#5c5c5c;left:458.07px;transform-origin:0 0;transform:scaleX(0.9277);">Перемещение товаров</div>
<div class="a" style="top:245px;font-size:13px;color:#5c5c5c;left:458.08px;transform-origin:0 0;transform:scaleX(0.9220);">Расходный кассовый ордер</div>
<div class="a" style="top:274px;font-size:13px;color:#5c5c5c;left:458.08px;transform-origin:0 0;transform:scaleX(0.9220);">Регистрация безналичной оплаты</div>
<div class="a" style="top:302px;font-size:13px;color:#5c5c5c;left:459.00px;transform-origin:0 0;transform:scaleX(0.9220);">Установка цен номенклатуры</div>
<div class="a" style="top:330px;font-size:13px;color:#5c5c5c;left:459.00px;transform-origin:0 0;transform:scaleX(0.9051);">Установка цен номенклатуры (по изменившимся ценам поставщика)</div>
<div class="b" style="left:416px;top:99px;width:40px;height:25px;background:linear-gradient(#e4e4e4,#dadada);border:1px solid #c0c0c0;border-top-color:#b0b0b0;border-radius:2px"></div>
<svg style="left:418px;top:102px" width="35" height="19" viewBox="0 0 35 19"><rect x="0.5" y="0.5" width="34" height="18" fill="none" stroke="#2a2a2a" stroke-width="1" stroke-dasharray="1.6 1.1"/></svg>
<svg style="left:421px;top:104px" width="18" height="16" viewBox="0 0 18 16"><rect x="1.2" y="1.2" width="7.8" height="8.3" rx="1.2" fill="#dfe8f2" stroke="#98b0ca" stroke-width="0.9"/><rect x="9.8" y="6.2" width="7" height="8.4" rx="1.2" fill="#dfe8f2" stroke="#98b0ca" stroke-width="0.9"/><path d="M5.4 6.4 V10.8 H9.5" fill="none" stroke="#4cbb44" stroke-width="2.4"/><path d="M9 7.6 L13.2 10.8 L9 14Z" fill="#4cbb44"/></svg>
<svg style="left:444px;top:111px" width="6" height="3" viewBox="0 0 6 3"><path d="M0 0H6L3 3Z" fill="#444"/></svg>
<div class="b" style="left:413px;top:96px;width:49px;height:34px;border:3px solid #fb0d0d;border-radius:2px"></div>
</body></html>
